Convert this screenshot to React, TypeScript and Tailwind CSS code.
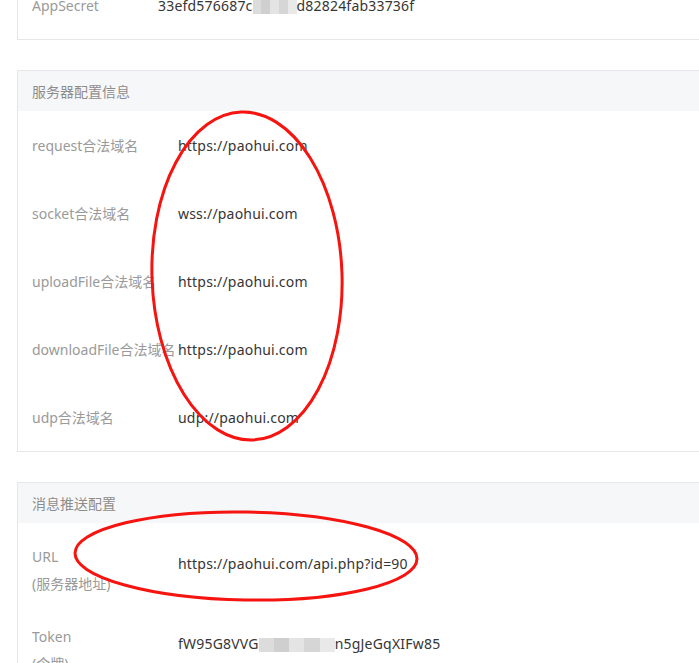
import React from 'react';

type Row = { label: React.ReactNode; value: React.ReactNode };

const Mosaic: React.FC<{ w: string }> = ({ w }) => (
  <span className={`inline-flex align-middle h-[14px] ${w} overflow-hidden`}>
    <span className="flex-1 bg-[#dcdcdc]" />
    <span className="flex-1 bg-[#cfcfcf]" />
    <span className="flex-1 bg-[#e4e4e4]" />
    <span className="flex-1 bg-[#d6d6d6]" />
    <span className="flex-1 bg-[#e9e9e9]" />
  </span>
);

const serverRows: Row[] = [
  { label: 'request合法域名', value: 'https://paohui.com' },
  { label: 'socket合法域名', value: 'wss://paohui.com' },
  { label: 'uploadFile合法域名', value: 'https://paohui.com' },
  { label: 'downloadFile合法域名', value: 'https://paohui.com' },
  { label: 'udp合法域名', value: 'udp://paohui.com' },
];

const pushRows: { label: string; sub: string; value: React.ReactNode }[] = [
  { label: 'URL', sub: '(服务器地址)', value: 'https://paohui.com/api.php?id=90' },
  {
    label: 'Token',
    sub: '(令牌)',
    value: (
      <>
        fW95G8VVG<Mosaic w="w-[76px]" />n5gJeGqXIFw85
      </>
    ),
  },
];

const Card: React.FC<{ title?: string; children: React.ReactNode; className?: string }> = ({ title, children, className = '' }) => (
  <div className={`ml-[17px] border border-r-0 border-[#e7e7eb] bg-white ${className}`}>
    {title && (
      <div className="h-[40px] flex items-center px-[14px] bg-[#f6f7f9] text-[#8d8d8d] text-[14px]">{title}</div>
    )}
    {children}
  </div>
);

export default function App() {
  return (
    <div className="relative w-full h-[663px] overflow-hidden bg-white font-['Noto_Sans','Noto_Sans_CJK_SC',sans-serif] text-[14px]">
      <div className="-mt-[29px]">
        <Card className="border-t-0">
          <div className="h-[68px] flex items-center px-[14px]">
            <div className="w-[126px] text-[#9a9a9a] shrink-0">AppSecret</div>
            <div className="text-[#353535] whitespace-nowrap tracking-[0.2px]">
              33efd576687c<Mosaic w="w-[44px]" />d82824fab33736f
            </div>
          </div>
        </Card>

        <Card title="服务器配置信息" className="mt-[30px]">
          {serverRows.map((r, i) => (
            <div key={i} className="h-[68px] flex items-center px-[14px]">
              <div className="w-[146px] text-[#9a9a9a] shrink-0 whitespace-nowrap">{r.label}</div>
              <div className="text-[#353535] whitespace-nowrap tracking-[0.2px]">{r.value}</div>
            </div>
          ))}
        </Card>

        <Card title="消息推送配置" className="mt-[30px]">
          {pushRows.map((r, i) => (
            <div key={i} className="h-[80px] flex items-start pt-[20px] px-[14px]">
              <div className="w-[146px] text-[#9a9a9a] shrink-0 leading-[27px]">
                <div>{r.label}</div>
                <div>{r.sub}</div>
              </div>
              <div className="text-[#353535] whitespace-nowrap leading-[27px] pt-[7px] tracking-[0.2px]">{r.value}</div>
            </div>
          ))}
        </Card>
      </div>

      <svg className="absolute inset-0 pointer-events-none" width="699" height="663" viewBox="0 0 699 663">
        <ellipse cx="247" cy="276" rx="95" ry="164" fill="none" stroke="#f5140f" strokeWidth="3" transform="rotate(-2 247 276)" />
        <ellipse cx="246" cy="556" rx="171" ry="44" fill="none" stroke="#f5140f" strokeWidth="3" transform="rotate(1 246 556)" />
      </svg>
    </div>
  );
}
